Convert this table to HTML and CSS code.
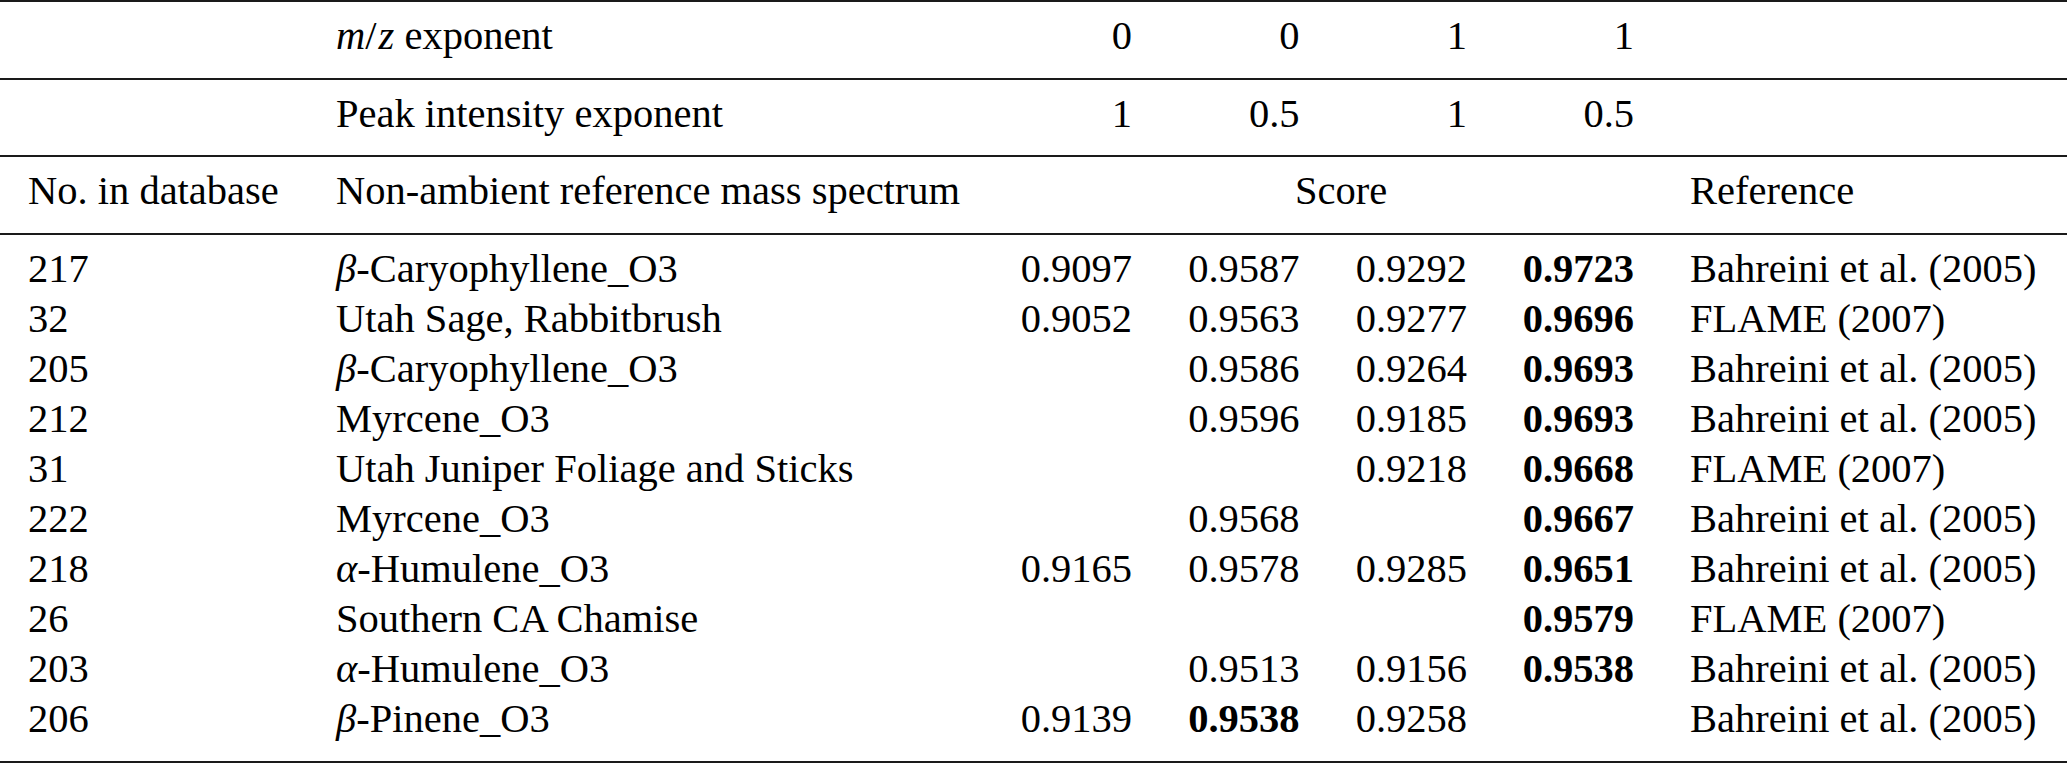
FILE: index.html
```html
<!DOCTYPE html>
<html>
<head>
<meta charset="utf-8">
<link rel="stylesheet" href="styles.css">
</head>
<body>
<table class="tbl">
  <colgroup>
    <col class="c-no">
    <col class="c-name">
    <col class="c-s1">
    <col class="c-s2">
    <col class="c-s3">
    <col class="c-s4">
    <col class="c-ref">
  </colgroup>
  <thead>
    <tr class="hrow">
      <th class="txt"></th>
      <th class="txt"><i>m</i>/<i class="z">z</i> exponent</th>
      <th class="num">0</th>
      <th class="num">0</th>
      <th class="num">1</th>
      <th class="num">1</th>
      <th class="txt"></th>
    </tr>
    <tr class="hrow hrow-short">
      <th class="txt"></th>
      <th class="txt">Peak intensity exponent</th>
      <th class="num">1</th>
      <th class="num">0.5</th>
      <th class="num">1</th>
      <th class="num">0.5</th>
      <th class="txt"></th>
    </tr>
    <tr class="hrow">
      <th class="txt">No. in database</th>
      <th class="txt">Non-ambient reference mass spectrum</th>
      <th class="span" colspan="4">Score</th>
      <th class="txt">Reference</th>
    </tr>
  </thead>
  <tbody>
    <tr><td class="txt">217</td><td class="txt"><i>β</i>-Caryophyllene_O3</td><td class="num">0.9097</td><td class="num">0.9587</td><td class="num">0.9292</td><td class="num"><b>0.9723</b></td><td class="txt">Bahreini et al. (2005)</td></tr>
    <tr><td class="txt">32</td><td class="txt">Utah Sage, Rabbitbrush</td><td class="num">0.9052</td><td class="num">0.9563</td><td class="num">0.9277</td><td class="num"><b>0.9696</b></td><td class="txt">FLAME (2007)</td></tr>
    <tr><td class="txt">205</td><td class="txt"><i>β</i>-Caryophyllene_O3</td><td class="num"></td><td class="num">0.9586</td><td class="num">0.9264</td><td class="num"><b>0.9693</b></td><td class="txt">Bahreini et al. (2005)</td></tr>
    <tr><td class="txt">212</td><td class="txt">Myrcene_O3</td><td class="num"></td><td class="num">0.9596</td><td class="num">0.9185</td><td class="num"><b>0.9693</b></td><td class="txt">Bahreini et al. (2005)</td></tr>
    <tr><td class="txt">31</td><td class="txt">Utah Juniper Foliage and Sticks</td><td class="num"></td><td class="num"></td><td class="num">0.9218</td><td class="num"><b>0.9668</b></td><td class="txt">FLAME (2007)</td></tr>
    <tr><td class="txt">222</td><td class="txt">Myrcene_O3</td><td class="num"></td><td class="num">0.9568</td><td class="num"></td><td class="num"><b>0.9667</b></td><td class="txt">Bahreini et al. (2005)</td></tr>
    <tr><td class="txt">218</td><td class="txt"><i>α</i>-Humulene_O3</td><td class="num">0.9165</td><td class="num">0.9578</td><td class="num">0.9285</td><td class="num"><b>0.9651</b></td><td class="txt">Bahreini et al. (2005)</td></tr>
    <tr><td class="txt">26</td><td class="txt">Southern CA Chamise</td><td class="num"></td><td class="num"></td><td class="num"></td><td class="num"><b>0.9579</b></td><td class="txt">FLAME (2007)</td></tr>
    <tr><td class="txt">203</td><td class="txt"><i>α</i>-Humulene_O3</td><td class="num"></td><td class="num">0.9513</td><td class="num">0.9156</td><td class="num"><b>0.9538</b></td><td class="txt">Bahreini et al. (2005)</td></tr>
    <tr><td class="txt">206</td><td class="txt"><i>β</i>-Pinene_O3</td><td class="num">0.9139</td><td class="num"><b>0.9538</b></td><td class="num">0.9258</td><td class="num"></td><td class="txt">Bahreini et al. (2005)</td></tr>
  </tbody>
</table>
</body>
</html>
```

FILE: styles.css
```css
html, body {
  margin: 0;
  padding: 0;
  background: #ffffff;
}

body {
  font-family: "Liberation Serif", "Times New Roman", serif;
  font-size: 40.5px;
  color: #000000;
}

.tbl {
  width: 2067px;
  table-layout: fixed;
  border-collapse: collapse;
  border-spacing: 0;
  border-top: 2px solid #1a1a1a;
  border-bottom: 2px solid #1a1a1a;
}

.c-no { width: 308px; }
.c-name { width: 692px; }
.c-s1 { width: 160px; }
.c-s2 { width: 167.5px; }
.c-s3 { width: 167.5px; }
.c-s4 { width: 167px; }
.c-ref { width: 405px; }

.tbl th,
.tbl td {
  padding: 0;
  line-height: 50px;
  white-space: nowrap;
  vertical-align: top;
  font-weight: normal;
}

.hrow th {
  padding-top: 9px;
  padding-bottom: 17px;
  border-bottom: 2px solid #1a1a1a;
}

.hrow-short th {
  padding-bottom: 16px;
}

.tbl .txt {
  text-align: left;
  padding-left: 28px;
}

.tbl .num {
  text-align: right;
  padding-right: 28px;
}

.tbl .span {
  text-align: center;
  padding-left: 20px;
}

.tbl tbody tr:first-child td {
  padding-top: 9px;
}

.tbl tbody tr:last-child td {
  padding-bottom: 17px;
}

.tbl b {
  font-weight: bold;
}

.tbl i {
  font-style: italic;
}

.tbl .z {
  padding-left: 2px;
}
```
